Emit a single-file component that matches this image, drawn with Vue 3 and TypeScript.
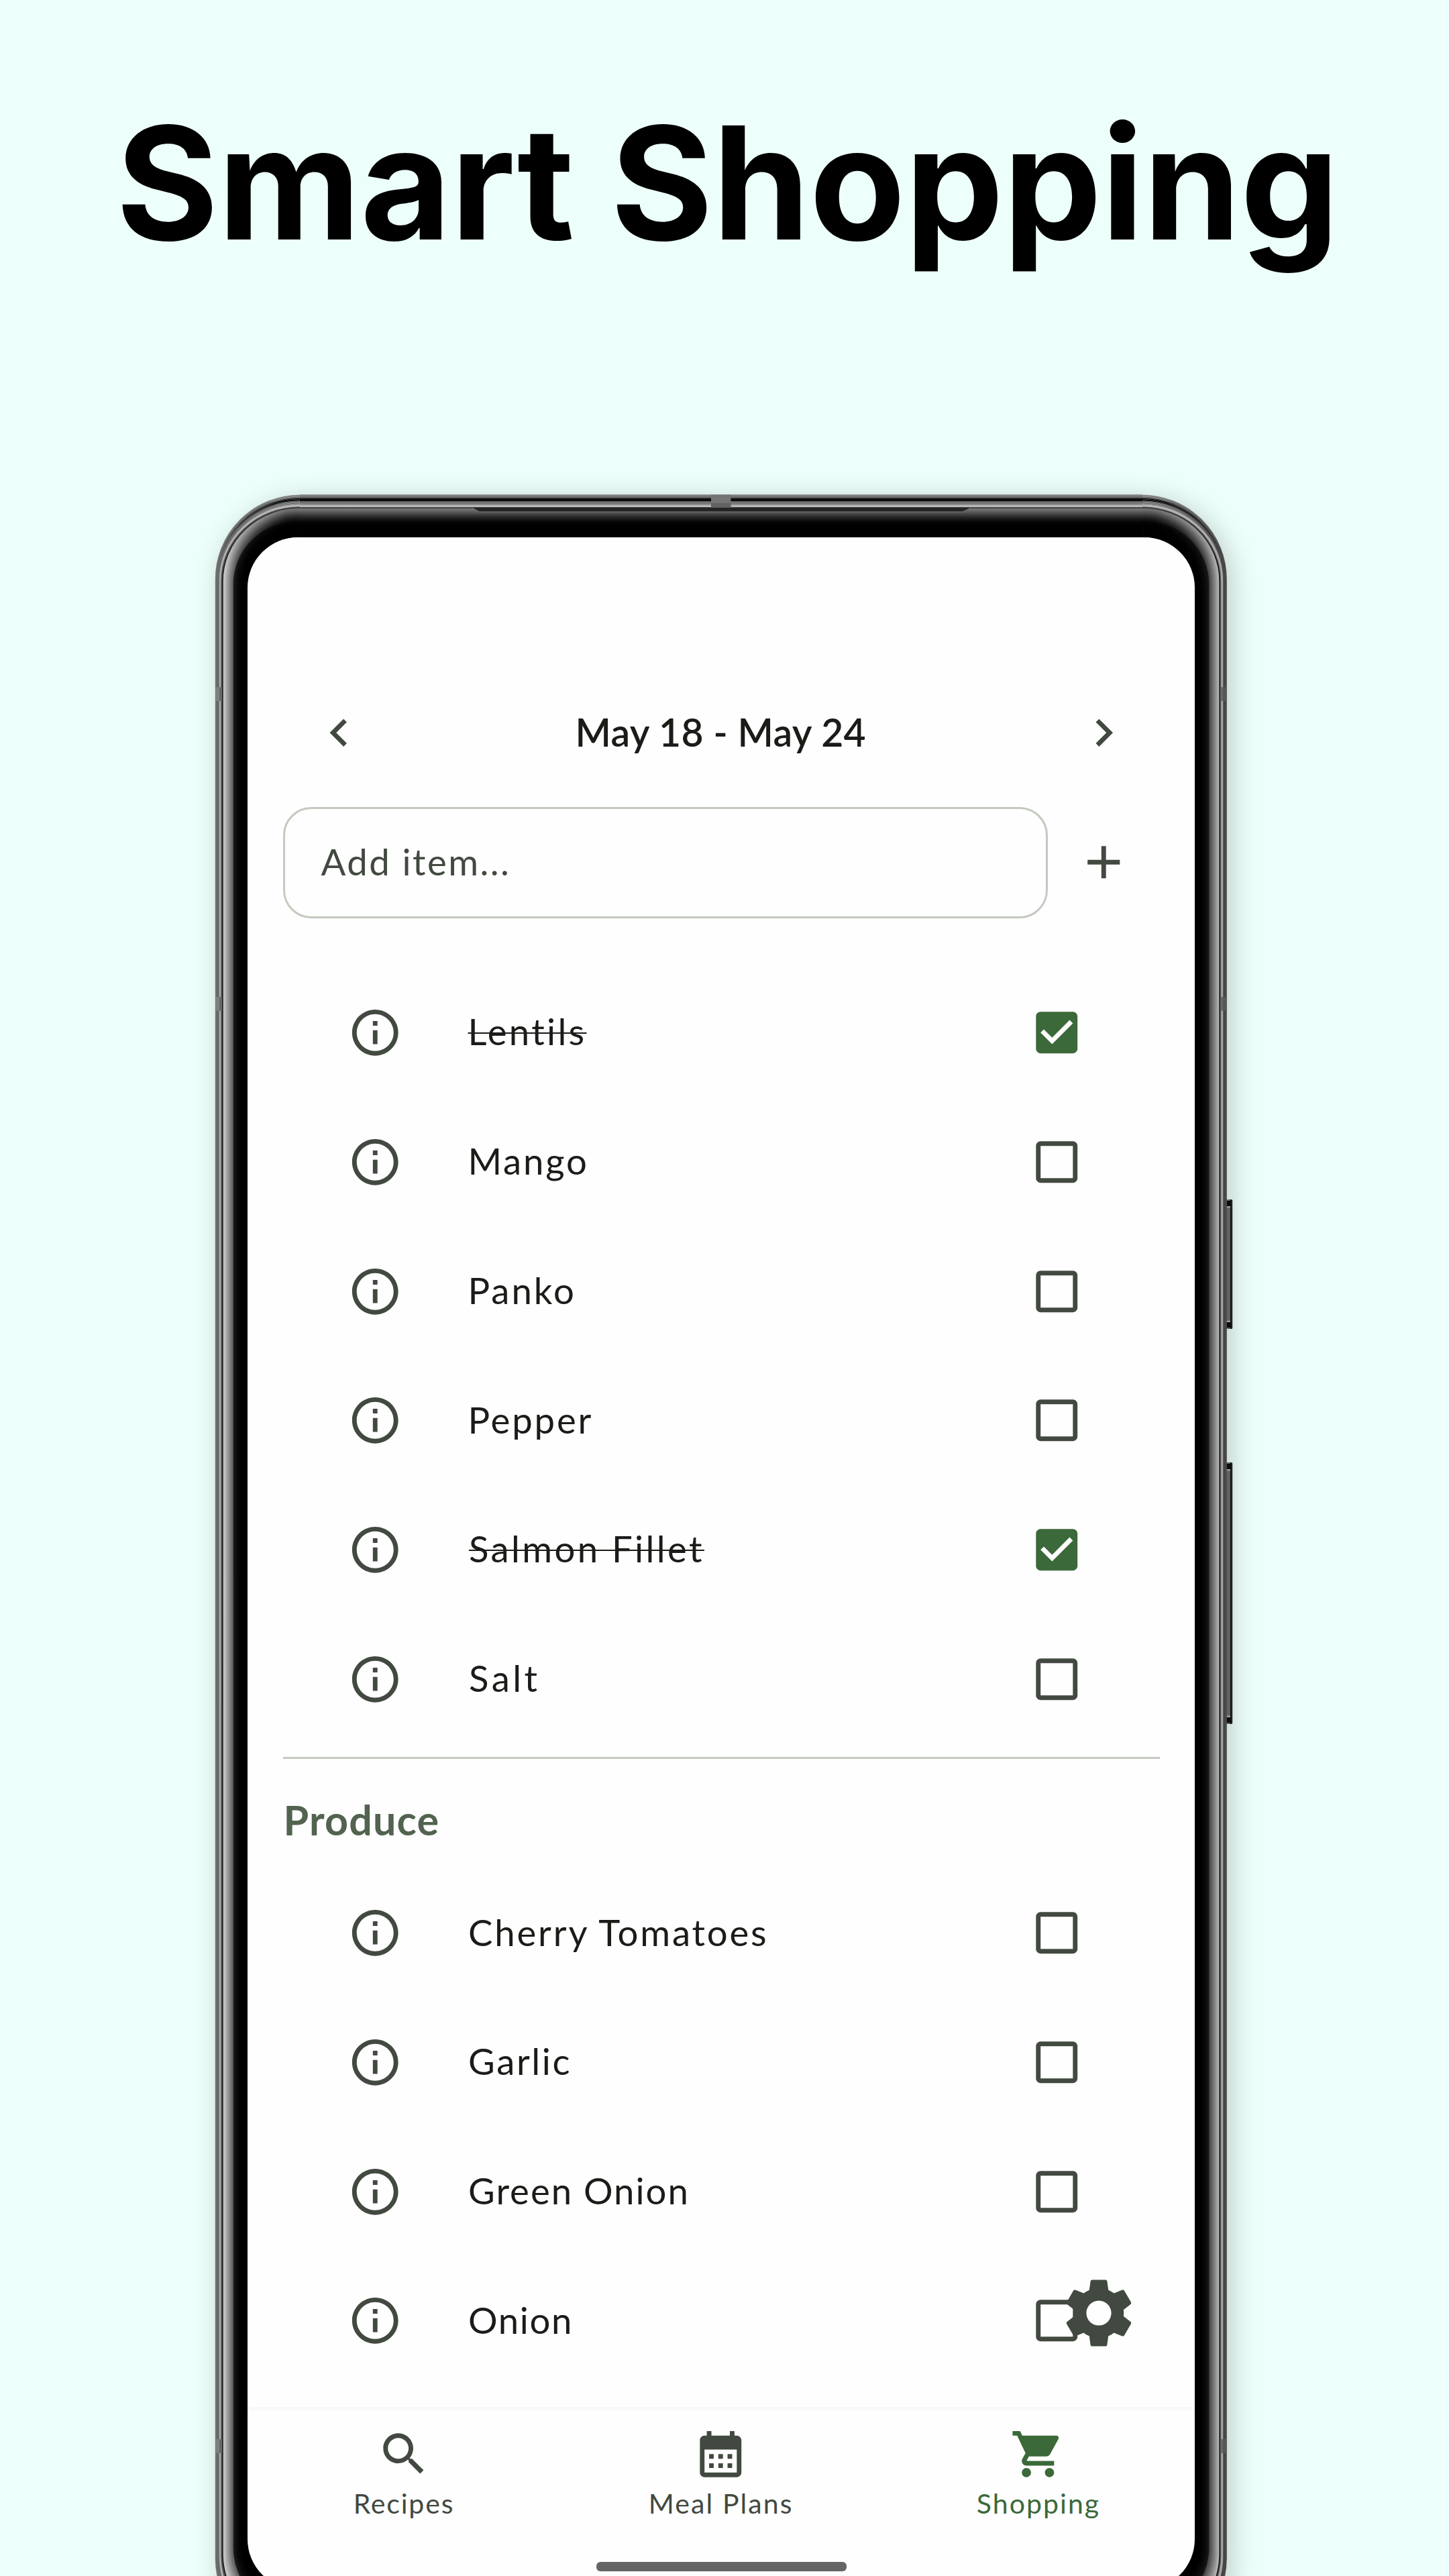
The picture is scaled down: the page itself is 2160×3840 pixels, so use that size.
<script setup lang="ts">
interface Item {
  name: string
  ink: number
  inset: number
  done?: boolean
}
interface Stop {
  at: number
  c: number
}
interface Seg {
  d: string
  stroke: string
}

const pantry: Item[] = [
  { name: 'Lentils', ink: 169, inset: 3.5, done: true },
  { name: 'Mango', ink: 171.5, inset: 3.5 },
  { name: 'Panko', ink: 152.5, inset: 3.5 },
  { name: 'Pepper', ink: 180, inset: 3.5 },
  { name: 'Salmon Fillet', ink: 346, inset: 2, done: true },
  { name: 'Salt', ink: 100.5, inset: 2 },
]
const produce: Item[] = [
  { name: 'Cherry Tomatoes', ink: 444, inset: 2 },
  { name: 'Garlic', ink: 148.5, inset: 2 },
  { name: 'Green Onion', ink: 322.5, inset: 2 },
  { name: 'Onion', ink: 149, inset: 2 },
]
const tabs = [
  {
    label: 'Recipes',
    ink: 145,
    icon: 'M15.5 14h-.79l-.28-.27C15.41 12.59 16 11.11 16 9.5 16 5.91 13.09 3 9.5 3S3 5.91 3 9.5 5.91 16 9.5 16c1.61 0 3.09-.59 4.23-1.57l.27.28v.79l5 4.99L20.49 19l-4.99-5zm-6 0C7.01 14 5 11.99 5 9.5S7.01 5 9.5 5 14 7.01 14 9.5 11.99 14 9.5 14z',
  },
  {
    label: 'Meal Plans',
    ink: 210,
    icon: 'M19 4h-1V2h-2v2H8V2H6v2H5c-1.11 0-1.99.9-1.99 2L3 20c0 1.1.89 2 2 2h14c1.1 0 2-.9 2-2V6c0-1.1-.9-2-2-2zm0 16H5V10h14v10zM9 14H7v-2h2v2zm4 0h-2v-2h2v2zm4 0h-2v-2h2v2zm-8 4H7v-2h2v2zm4 0h-2v-2h2v2zm4 0h-2v-2h2v2z',
  },
  {
    label: 'Shopping',
    ink: 181,
    active: true,
    icon: 'M7 18c-1.1 0-1.99.9-1.99 2S5.9 22 7 22s2-.9 2-2-.9-2-2-2zM1 2v2h2l3.6 7.59-1.35 2.45c-.16.28-.25.61-.25.96 0 1.1.9 2 2 2h12v-2H7.42c-.14 0-.25-.11-.25-.25l.03-.12.9-1.63h7.45c.75 0 1.41-.41 1.75-1.03l3.58-6.49c.08-.14.12-.31.12-.48 0-.55-.45-1-1-1H5.21l-.94-2H1zm16 16c-1.1 0-1.99.9-1.99 2s.89 2 1.99 2 2-.9 2-2-.9-2-2-2z',
  },
]

// Tracks a label so that its glyphs span exactly `ink` pixels and its box hugs them.
const ctx = document.createElement('canvas').getContext('2d')!
function fit(text: string, font: string, ink: number, inset = 0) {
  ctx.font = font
  const m = ctx.measureText(text)
  const left = -m.actualBoundingBoxLeft
  const natural = m.actualBoundingBoxRight - left
  const ls = (ink - natural) / (text.length - 1)
  const advance = m.width + ls * text.length
  return {
    letterSpacing: `${ls.toFixed(3)}px`,
    marginLeft: `${(inset - left).toFixed(2)}px`,
    marginRight: `${(ink + left - advance).toFixed(2)}px`,
  }
}
const BODY = '400 54.5px Lato'

// Bezel: concentric rings, shaded by one profile per side.
function shade(profile: Stop[], at: number): number {
  for (let i = 1; i < profile.length; i++) {
    const a = profile[i - 1]
    const b = profile[i]
    if (at <= b.at) return b.at === a.at ? b.c : a.c + ((b.c - a.c) * (at - a.at)) / (b.at - a.at)
  }
  return profile[profile.length - 1].c
}
const s = (...v: number[]): Stop[] => {
  const out: Stop[] = []
  for (let i = 0; i < v.length; i += 2) out.push({ at: v[i], c: v[i + 1] })
  return out
}
const leftP = s(0, 150, 1, 112, 6, 104, 6.5, 170, 8.7, 185, 9.2, 50, 10.5, 100, 11, 20, 12, 30, 12.5, 205, 16, 180, 27, 92, 27.5, 28, 33, 10, 40, 0, 48.5, 0)
const rightP = s(0, 90, 1, 72, 5.5, 70, 6, 165, 8.5, 165, 9, 110, 9.6, 100, 10, 36, 11.5, 36, 12, 185, 16, 150, 26.5, 68, 27, 24, 33, 10, 40, 0, 48.5, 0)
const topP = s(0, 150, 1, 135, 4, 110, 6, 60, 6.6, 10, 9.5, 10, 10.2, 90, 12, 118, 15, 125, 16, 180, 18.5, 185, 19.2, 70, 21, 60, 21.5, 120, 27, 85, 34, 38, 41, 6, 46, 0, 63.5, 0)
const depth = s(0, 0, 6, 15.5, 9.3, 19, 12, 21.2, 27.5, 40, 48.5, 63.5)
const W = 1507.5
const H = 3203.5
const grey = (n: number) => {
  const v = Math.round(n)
  return `rgb(${v},${v},${v})`
}
const rings: Seg[] = []
const grads: { id: string; x1: number; y1: number; x2: number; y2: number; a: string; b: string }[] = []
for (let o = 0.5, k = 0; o < 48.6; o += 0.5, k++) {
  const t = o / 48.5
  const v = shade(depth, o)
  const cx = 126 - 2.5 * t
  const cy = 126 + 13 * t
  const by = H - 126 - 30 * t
  const rx = cx - o
  const ry = cy - v
  const bb = H - o * 1.64
  const l = grey(shade(leftP, o))
  const r = grey(shade(rightP, o))
  const u = grey(shade(topP, v))
  grads.push({ id: `tl${k}`, x1: o, y1: cy, x2: cx, y2: v, a: l, b: u })
  grads.push({ id: `tr${k}`, x1: W - o, y1: cy, x2: W - cx, y2: v, a: r, b: u })
  rings.push({ d: `M${cx} ${bb}A${rx} ${bb - by} 0 0 1 ${o} ${by}V${cy}`, stroke: l })
  rings.push({ d: `M${W - cx} ${bb}A${rx} ${bb - by} 0 0 0 ${W - o} ${by}V${cy}`, stroke: r })
  rings.push({ d: `M${o} ${cy}A${rx} ${ry} 0 0 1 ${cx} ${v}`, stroke: `url(#tl${k})` })
  rings.push({ d: `M${W - o} ${cy}A${rx} ${ry} 0 0 0 ${W - cx} ${v}`, stroke: `url(#tr${k})` })
  rings.push({ d: `M${cx} ${v}H${W - cx}`, stroke: u })
}
const rungs = topP.map((p) => ({ o: `${((p.at / 63.5) * 100).toFixed(2)}%`, c: grey(p.c) }))
</script>

<template>
  <main class="page">
    <h1 class="title"><span :style="fit('Smart Shopping', '700 233px Inter', 1800)">Smart Shopping</span></h1>

    <div class="phone">
      <svg class="frame" viewBox="0 0 1520 3204" width="1520" height="3204" aria-hidden="true">
        <defs>
          <linearGradient v-for="g in grads" :id="g.id" :key="g.id" gradientUnits="userSpaceOnUse" :x1="g.x1" :y1="g.y1" :x2="g.x2" :y2="g.y2">
            <stop offset="0.1" :stop-color="g.a" />
            <stop offset="0.9" :stop-color="g.b" />
          </linearGradient>
          <linearGradient id="lip" x1="0" y1="0" x2="0" y2="1">
            <stop v-for="r in rungs" :key="r.o" :offset="r.o" :stop-color="r.c" />
          </linearGradient>
          <linearGradient id="key" x1="0" y1="0" x2="1" y2="0">
            <stop offset="0" stop-color="#4a4a4a" />
            <stop offset="0.45" stop-color="#666" />
            <stop offset="0.68" stop-color="#5a5a5a" />
            <stop offset="0.74" stop-color="#111" />
            <stop offset="0.88" stop-color="#161616" />
            <stop offset="1" stop-color="#777" />
          </linearGradient>
        </defs>
        <g v-for="b in [{ y: 1051, h: 193 }, { y: 1443, h: 390 }]" :key="b.y">
          <rect x="1504" :y="b.y" width="12.5" :height="b.h" rx="2" fill="url(#key)" />
          <rect x="1507" :y="b.y + 2" width="7.5" height="8" fill="#0c0c0c" />
          <rect x="1507" :y="b.y + 10" width="6" height="2.5" fill="#999" />
          <rect x="1507" :y="b.y + b.h - 10" width="7.5" height="8" fill="#0c0c0c" />
          <rect x="1507" :y="b.y + b.h - 12.5" width="6" height="2.5" fill="#999" />
        </g>
        <path v-for="(r, i) in rings" :key="i" :d="r.d" :stroke="r.stroke" stroke-width="1.5" fill="none" />
        <rect x="126" y="0" width="1256" height="63.5" fill="url(#lip)" />
        <path d="M382 19.5H1127L1114 25.5H394Z" fill="#242424" />
        <path d="M383 20L394 26.2H1114L1126 20" fill="none" stroke="#666" stroke-width="1.2" />
        <rect x="739" y="0.5" width="29.5" height="19" fill="#747474" />
        <rect x="739" y="13" width="29.5" height="6.5" fill="#626262" />
        <g v-for="y in [287.5, 749, 2899]" :key="y">
          <rect x="0.5" :y="y" width="9" height="20.5" fill="#808080" />
          <rect x="6" :y="y" width="3" height="20.5" fill="#686868" />
          <rect x="1498.5" :y="y" width="9" height="20.5" fill="#585858" />
          <rect x="1498.5" :y="y" width="3" height="20.5" fill="#6a6a6a" />
        </g>
      </svg>

      <section class="screen">
        <header class="week">
          <svg class="icon" viewBox="0 0 24 24"><path d="M15.41 7.41 14 6l-6 6 6 6 1.41-1.41L10.83 12z" /></svg>
          <h2><span :style="fit('May 18 - May 24', '600 57px Lato', 431)">May 18 - May 24</span></h2>
          <svg class="icon" viewBox="0 0 24 24"><path d="M8.59 16.59 10 18l6-6-6-6-1.41 1.41L13.17 12z" /></svg>
        </header>

        <div class="add">
          <div class="field"><span :style="fit('Add item...', BODY, 277.5)">Add item...</span></div>
          <svg class="icon" viewBox="0 0 24 24"><path d="M19 13h-6v6h-2v-6H5v-2h6V5h2v6h6v2z" /></svg>
        </div>

        <template v-for="(group, gi) in [pantry, produce]" :key="gi">
          <h3 v-if="gi === 1"><span :style="fit('Produce', '700 61px Lato', 226)">Produce</span></h3>
          <ul>
            <li v-for="item in group" :key="item.name">
              <svg class="icon" viewBox="0 0 24 24">
                <path d="M11 7h2v2h-2zm0 4h2v6h-2zm1-9C6.48 2 2 6.48 2 12s4.48 10 10 10 10-4.48 10-10S17.52 2 12 2zm0 18c-4.41 0-8-3.59-8-8s3.59-8 8-8 8 3.59 8 8-3.59 8-8 8z" />
              </svg>
              <div class="name">
                <span :class="{ done: item.done }" :style="fit(item.name, BODY, item.ink, item.inset)">{{ item.name }}</span>
              </div>
              <svg class="icon" :class="{ checked: item.done }" viewBox="0 0 24 24">
                <path v-if="item.done" d="M19 3H5c-1.11 0-2 .9-2 2v14c0 1.1.89 2 2 2h14c1.11 0 2-.9 2-2V5c0-1.1-.89-2-2-2zm-9 14l-5-5 1.41-1.41L10 14.17l7.59-7.59L19 8l-9 9z" />
                <path v-else d="M19 5v14H5V5h14m0-2H5c-1.1 0-2 .9-2 2v14c0 1.1.9 2 2 2h14c1.1 0 2-.9 2-2V5c0-1.1-.9-2-2-2z" />
              </svg>
            </li>
          </ul>
        </template>

        <svg class="gear" viewBox="0 0 24 24">
          <path d="M19.14 12.94c.04-.3.06-.61.06-.94 0-.32-.02-.64-.07-.94l2.03-1.58c.18-.14.23-.41.12-.61l-1.92-3.32c-.12-.22-.37-.29-.59-.22l-2.39.96c-.5-.38-1.03-.7-1.62-.94l-.36-2.54c-.04-.24-.24-.41-.48-.41h-3.84c-.24 0-.43.17-.47.41l-.36 2.54c-.59.24-1.13.57-1.62.94l-2.39-.96c-.22-.08-.47 0-.59.22L2.74 8.87c-.12.21-.08.47.12.61l2.03 1.58c-.05.3-.09.63-.09.94s.02.64.07.94l-2.03 1.58c-.18.14-.23.41-.12.61l1.92 3.32c.12.22.37.29.59.22l2.39-.96c.5.38 1.03.7 1.62.94l.36 2.54c.05.24.24.41.48.41h3.84c.24 0 .44-.17.47-.41l.36-2.54c.59-.24 1.13-.56 1.62-.94l2.39.96c.22.08.47 0 .59-.22l1.92-3.32c.12-.22.07-.47-.12-.61l-2.01-1.58zM12 15.6c-1.98 0-3.6-1.62-3.6-3.6s1.62-3.6 3.6-3.6 3.6 1.62 3.6 3.6-1.62 3.6-3.6 3.6z" />
        </svg>

        <nav>
          <div v-for="tab in tabs" :key="tab.label" class="tab" :class="{ active: tab.active }">
            <svg class="icon" viewBox="0 0 24 24"><path :d="tab.icon" /></svg>
            <div class="label"><span :style="fit(tab.label, '400 41px Lato', tab.ink)">{{ tab.label }}</span></div>
          </div>
        </nav>
        <div class="home"></div>
      </section>
    </div>
  </main>
</template>

<style>
body {
  background: #edfffb;
}
</style>

<style scoped>
.page {
  box-sizing: border-box;
  width: 2160px;
  height: 3840px;
  overflow: hidden;
  background: #edfffb;
  font-family: Lato, 'Noto Sans', sans-serif;
  color: #1a1c18;
}
h1,
h2,
h3,
ul {
  margin: 0;
  padding: 0;
  font-weight: inherit;
  list-style: none;
}
span {
  white-space: pre;
  display: inline-block;
}
.title {
  height: 736.5px;
  box-sizing: border-box;
  padding: 131px 0 0 182px;
  font: 700 233px/282px Inter, sans-serif;
  color: #000;
}
.phone {
  position: relative;
  box-sizing: border-box;
  width: 1507.5px;
  height: 3203.5px;
  margin-left: 320.5px;
  padding: 64px 47.5px 0 48.5px;
  border-radius: 126px;
  box-shadow: 8px 8px 40px rgba(0, 0, 0, 0.2);
}
.frame {
  position: absolute;
  left: 0;
  top: 0;
  overflow: visible;
}
.screen {
  position: relative;
  box-sizing: border-box;
  height: 3059.5px;
  padding: 250px 52px 0 53px;
  border-radius: 75px;
  background: #fefefe;
}
.icon {
  flex: none;
  display: block;
  width: 82.5px;
  height: 82.5px;
  fill: #424940;
}
.week {
  display: flex;
  align-items: center;
  justify-content: space-between;
  height: 82.5px;
  padding: 0 42px 0 41.5px;
}
.week h2 {
  font-size: 57px;
  font-weight: 600;
  line-height: 82px;
  padding: 0 0 1px 1px;
}
.add {
  display: flex;
  align-items: center;
  justify-content: space-between;
  margin-top: 69.5px;
  padding-right: 42px;
}
.field {
  box-sizing: border-box;
  width: 1140px;
  height: 166px;
  padding-left: 53.5px;
  border: 3.5px solid #c3cabf;
  border-radius: 42px;
  font-size: 54.5px;
  line-height: 156px;
  color: #424940;
}
ul {
  margin-top: 74.6px;
}
h3 + ul {
  margin-top: 0;
}
li {
  display: flex;
  align-items: center;
  height: 192.7px;
  padding: 0 112px 0 95.5px;
}
.name {
  flex: 1;
  padding: 0 0 4px 98px;
  font-size: 54.5px;
  line-height: 80px;
}
.done {
  text-decoration: line-through;
  text-decoration-thickness: 2px;
}
.icon.checked {
  fill: #3b6939;
}
h3 {
  box-sizing: border-box;
  height: 166px;
  margin-top: 20px;
  padding: 48px 0 0 4.5px;
  border-top: 3.4px solid #c3cabf;
  font-size: 61px;
  font-weight: 700;
  line-height: 86px;
  color: #52634f;
}
.gear {
  position: absolute;
  left: 1207px;
  top: 2585.8px;
  width: 124px;
  height: 124px;
  fill: #424940;
}
nav {
  display: flex;
  gap: 6.3px;
  height: 224px;
  margin: 32px -52px 0 -53px;
  border-top: 5px solid #f9f9f9;
}
.tab {
  flex: 1;
  display: flex;
  flex-direction: column;
  align-items: center;
  padding-top: 24.5px;
  color: #424940;
}
.label {
  margin-top: 2px;
  font-size: 41px;
  line-height: 60px;
}
.tab.active {
  color: #3b6939;
}
.tab.active .icon {
  fill: #3b6939;
}
.home {
  width: 373px;
  height: 14.5px;
  margin: 2px auto 0;
  border-radius: 6px;
  background: #656565;
}
</style>
